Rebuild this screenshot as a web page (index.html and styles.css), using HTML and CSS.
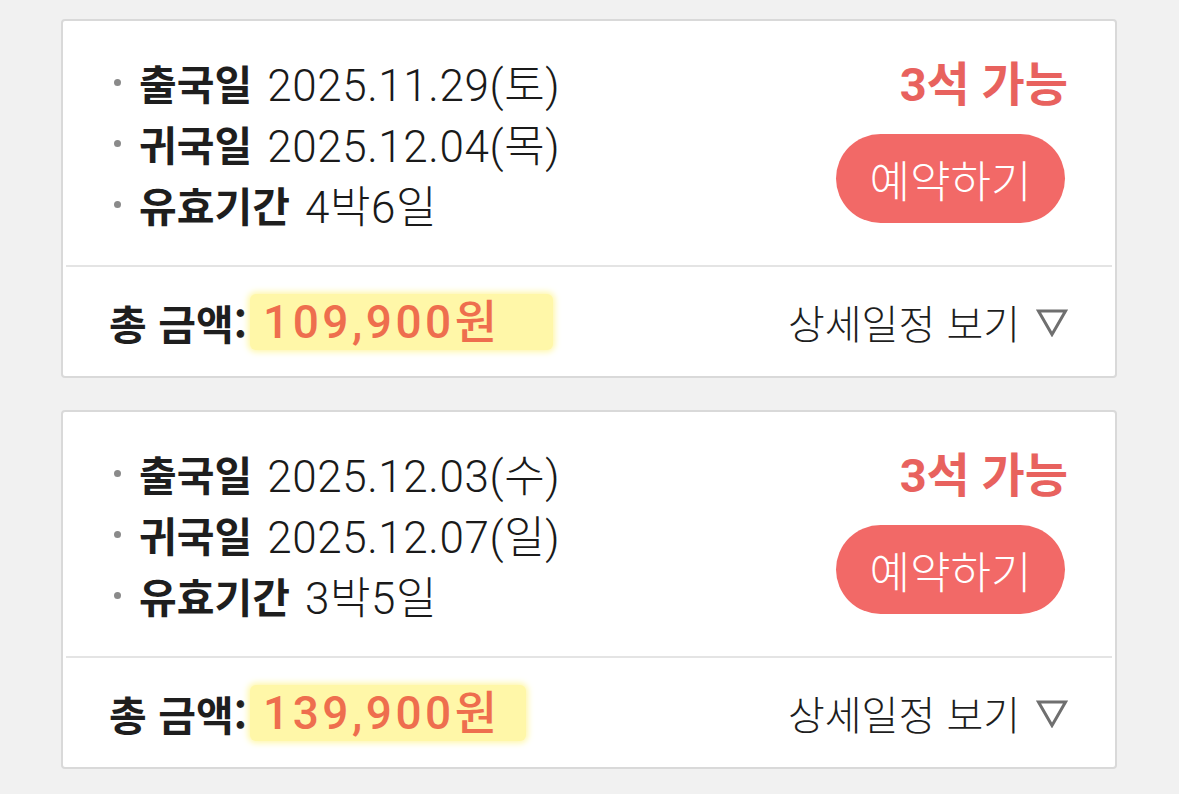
FILE: index.html
```html
<!DOCTYPE html>
<html lang="ko">
<head>
<meta charset="utf-8">
<link rel="stylesheet" href="styles.css">
</head>
<body>
<main class="list">
  <section class="card">
    <div class="card-top">
      <ul class="info">
        <li><b>출국일</b><span class="val">2025.11.29(토)</span></li>
        <li><b>귀국일</b><span class="val">2025.12.04(목)</span></li>
        <li><b>유효기간</b><span class="val">4박6일</span></li>
      </ul>
      <div class="actions">
        <div class="seats">3석 가능</div>
        <button class="reserve">예약하기</button>
      </div>
    </div>
    <div class="card-bottom">
      <div class="total"><b>총 금액:</b><span class="price hl1">109,900원</span></div>
      <div class="detail">상세일정 보기 <svg class="tri" viewBox="0 0 32 28" width="32" height="28"><path d="M2.5 2 H29.5 L16 25.5 Z" fill="none" stroke="#6f6f6f" stroke-width="3"/></svg></div>
    </div>
  </section>
  <section class="card">
    <div class="card-top">
      <ul class="info">
        <li><b>출국일</b><span class="val">2025.12.03(수)</span></li>
        <li><b>귀국일</b><span class="val">2025.12.07(일)</span></li>
        <li><b>유효기간</b><span class="val">3박5일</span></li>
      </ul>
      <div class="actions">
        <div class="seats">3석 가능</div>
        <button class="reserve">예약하기</button>
      </div>
    </div>
    <div class="card-bottom">
      <div class="total"><b>총 금액:</b><span class="price hl2">139,900원</span></div>
      <div class="detail">상세일정 보기 <svg class="tri" viewBox="0 0 32 28" width="32" height="28"><path d="M2.5 2 H29.5 L16 25.5 Z" fill="none" stroke="#6f6f6f" stroke-width="3"/></svg></div>
    </div>
  </section>
</main>
</body>
</html>
```

FILE: styles.css
```css
html, body {
  margin: 0;
  padding: 0;
  background: #f1f1f1;
}
body {
  font-family: "Noto Sans CJK KR", "Noto Sans", sans-serif;
  color: #1e1e1e;
}
.list {
  display: flex;
  flex-direction: column;
  gap: 32px;
  padding: 19px 62px 0 61px;
}
.card {
  background: #fff;
  border: 2px solid #d9d9d9;
  border-radius: 4px;
  height: 359px;
  box-sizing: border-box;
  display: flex;
  flex-direction: column;
}
.card-top {
  height: 246px;
  box-sizing: border-box;
  display: flex;
  justify-content: space-between;
  padding: 30px 47px 0 48px;
  border-bottom: 2px solid #e4e4e4;
  margin: 0 3px;
}
.info {
  list-style: none;
  margin: 0;
  padding: 0;
}
.info li {
  height: 61px;
  display: flex;
  align-items: center;
  white-space: nowrap;
}
.info li::before {
  content: "";
  width: 7px;
  height: 7px;
  border-radius: 50%;
  background: #8a8a8a;
  margin-right: 18px;
  margin-top: 2px;
}
.info b {
  font-family: "Noto Sans CJK KR", sans-serif;
  font-weight: 700;
  font-size: 41px;
  margin-right: 15px;
}
.val {
  font-family: Roboto, "Noto Sans CJK KR", sans-serif;
  font-weight: 300;
  font-size: 44px;
  letter-spacing: 0.6px;
  color: #1a1a1a;
}
.actions {
  display: flex;
  flex-direction: column;
  align-items: flex-end;
}
.seats {
  color: #e8625e;
  font-family: Roboto, "Noto Sans CJK KR", sans-serif;
  font-weight: 700;
  font-size: 47px;
  line-height: 56px;
  margin-top: 6px;
  margin-right: -3px;
}
.reserve {
  margin-top: 21px;
  width: 229px;
  height: 89px;
  border: none;
  border-radius: 45px;
  background: #f26967;
  color: #fff;
  font-family: "Noto Sans CJK KR", sans-serif;
  font-weight: 300;
  font-size: 44px;
  padding: 0;
}
.card-bottom {
  flex: 1;
  display: flex;
  align-items: center;
  justify-content: space-between;
  padding: 0 47px 0 46px;
}
.total {
  display: flex;
  align-items: center;
}
.total b {
  font-weight: 700;
  font-size: 41px;
}
.price {
  font-family: Roboto, "Noto Sans CJK KR", sans-serif;
  color: #ee6e4e;
  font-weight: 500;
  font-size: 46px;
  letter-spacing: 3.5px;
  line-height: 56px;
  background: #fff7a8;
  box-shadow: 0 0 6px 2px #fff7a8;
  border-radius: 6px;
  margin-left: 3px;
  padding: 0 0 0 13px;
}
.hl1 { padding-right: 52px; }
.hl2 { padding-right: 25px; }
.detail {
  font-size: 40px;
  font-weight: 300;
  display: flex;
  align-items: center;
  gap: 16px;
  color: #1e1e1e;
}
.tri {
  display: block;
  margin-top: 2px;
}
```
